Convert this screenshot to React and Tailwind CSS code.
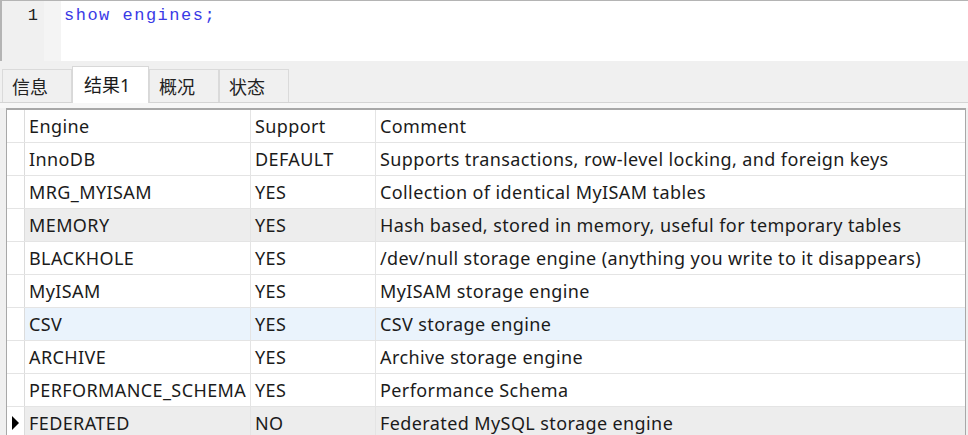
import React from "react";

const rows = [
  ["InnoDB", "DEFAULT", "Supports transactions, row-level locking, and foreign keys", ""],
  ["MRG_MYISAM", "YES", "Collection of identical MyISAM tables", ""],
  ["MEMORY", "YES", "Hash based, stored in memory, useful for temporary tables", "gray"],
  ["BLACKHOLE", "YES", "/dev/null storage engine (anything you write to it disappears)", ""],
  ["MyISAM", "YES", "MyISAM storage engine", ""],
  ["CSV", "YES", "CSV storage engine", "blue"],
  ["ARCHIVE", "YES", "Archive storage engine", ""],
  ["PERFORMANCE_SCHEMA", "YES", "Performance Schema", ""],
  ["FEDERATED", "NO", "Federated MySQL storage engine", "gray", true],
];

const tabs = ["信息", "结果1", "概况", "状态"];

function Row({ cells, bg, current }) {
  const bgClass =
    bg === "gray" ? "bg-[#ededed]" : bg === "blue" ? "bg-[#eaf3fc]" : "bg-white";
  return (
    <div className={`flex h-[33px] shrink-0 border-b border-[#e4e4e4] ${bgClass}`}>
      <div className="w-[18px] shrink-0 border-r border-[#dcdcdc] bg-white flex items-center justify-center">
        {current && (
          <svg width="9" height="16" viewBox="0 0 9 16" className="shrink-0">
            <path d="M1 1 L8 8 L1 15 Z" fill="#000" />
          </svg>
        )}
      </div>
      <div className="w-[226px] shrink-0 border-r border-[#e4e4e4] pl-[4px] flex items-center whitespace-nowrap overflow-hidden">
        {cells[0]}
      </div>
      <div className="w-[125px] shrink-0 border-r border-[#e4e4e4] pl-[4px] flex items-center whitespace-nowrap">
        {cells[1]}
      </div>
      <div className="flex-1 pl-[4px] flex items-center whitespace-nowrap">{cells[2]}</div>
    </div>
  );
}

export default function App() {
  return (
    <div className="w-[968px] h-[435px] overflow-hidden bg-[#f0f0f0] flex flex-col font-['Noto_Sans','Noto_Sans_CJK_SC',sans-serif] text-[#1b1b1b]">
      {/* editor */}
      <div className="h-[61px] shrink-0 flex border-t border-l-2 border-[#b4b4b4] bg-white">
        <div className="w-[42px] shrink-0 bg-[#f0f0f0] flex justify-end pr-[6px] pt-[2px] font-['Liberation_Mono',monospace] text-[17px] text-[#222]">
          1
        </div>
        <div className="w-[17px] shrink-0 bg-[#f4f4f4]"></div>
        <div className="flex-1 pl-[3px] pt-[2px] font-['Liberation_Mono',monospace] text-[17px] tracking-[1.5px] text-[#3a3ae6]">
          show engines;
        </div>
      </div>

      {/* tabs */}
      <div className="h-[42px] shrink-0 flex items-end pl-[2px] border-b border-[#d4d4d4]">
        {tabs.map((t, i) =>
          i === 1 ? (
            <div
              key={t}
              className="h-[37px] w-[77px] bg-white border border-b-0 border-[#d8d8d8] flex items-center pl-[11px] pt-[1px] text-[18px] -mb-px"
            >
              {t}
            </div>
          ) : (
            <div
              key={t}
              className="h-[33px] w-[70px] border border-b-0 border-[#dadada] flex items-center pl-[9px] pt-[2px] text-[18px] text-[#222]"
            >
              {t}
            </div>
          )
        )}
      </div>

      <div className="h-[5px] shrink-0 bg-[#f7f7f7]"></div>

      {/* grid */}
      <div className="flex-1 ml-[6px] mr-[2px] bg-white border-t-2 border-l border-r border-[#a8a8a8] flex flex-col text-[18px] tracking-[0.4px] overflow-hidden">
        <Row cells={["Engine", "Support", "Comment"]} />
        {rows.map((r) => (
          <Row key={r[0]} cells={r} bg={r[3]} current={r[4]} />
        ))}
      </div>
    </div>
  );
}
